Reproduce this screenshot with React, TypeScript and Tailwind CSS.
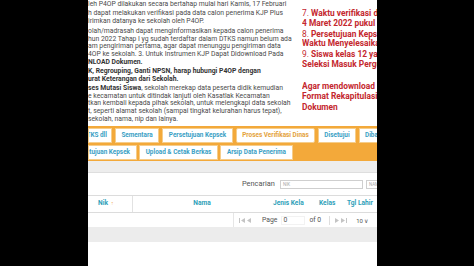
const tab =
  'flex items-center justify-center h-full shrink-0 bg-white border border-[#f6cd8a] text-[#3a9fc5] font-bold text-[6.4px] whitespace-nowrap overflow-hidden';

const First = ({ flip = false }: { flip?: boolean }) => (
  <svg width="6" height="5" viewBox="0 0 6 5" className={flip ? 'rotate-180' : ''}>
    <rect x="0" y="0" width="1" height="5" fill="#c4c4c4" />
    <path d="M6 0 L2 2.5 L6 5 Z" fill="#c4c4c4" />
  </svg>
);

const Prev = ({ flip = false }: { flip?: boolean }) => (
  <svg width="4" height="5" viewBox="0 0 4 5" className={flip ? 'rotate-180' : ''}>
    <path d="M4 0 L0 2.5 L4 5 Z" fill="#c4c4c4" />
  </svg>
);

const TopText = () => (
  <div className="flex h-[126px] shrink-0">
    <div className="w-[214px] shrink-0 pt-[1px] text-[6.8px] leading-[7.7px] text-[#4a4a4a] whitespace-nowrap overflow-hidden">
      <div>leh P4OP dilakukan secara bertahap mulai hari Kamis, 17 Februari</div>
      <div className="mt-[1.3px]">
        <div>h dapat melakukan verifikasi pada data calon penerima KJP Plus</div>
        <div>irimkan datanya ke sekolah oleh P4OP.</div>
      </div>
      <div className="mt-[2.6px]">
        <div>olah/madrasah dapat menginformasikan kepada calon penerima</div>
        <div>hun 2022 Tahap I yg sudah terdaftar dalam DTKS namun belum ada</div>
        <div>am pengiriman pertama, agar dapat menunggu pengiriman data</div>
        <div>4OP ke sekolah. 3. Untuk Instrumen KJP Dapat Didownload Pada</div>
        <div className="font-bold text-[#333]">NLOAD Dokumen.</div>
      </div>
      <div className="mt-[1.5px] font-bold text-[#333]">
        <div>K, Regrouping, Ganti NPSN, harap hubungi P4OP dengan</div>
        <div>urat Keterangan dari Sekolah.</div>
      </div>
      <div className="mt-[1.6px]">
        <div>
          <span className="font-bold text-[#333]">ses Mutasi Siswa</span>, sekolah merekap data peserta didik kemudian
        </div>
        <div>e kecamatan untuk ditindak lanjuti oleh Kasatlak Kecamatan</div>
        <div>tkan kembali kepada pihak sekolah, untuk melengkapi data sekolah</div>
        <div>t, seperti alamat sekolah (sampai tingkat kelurahan harus tepat),</div>
        <div>sekolah, nama, nip dan lainya.</div>
      </div>
    </div>
    <div className="flex-1 pt-[9px] text-[8.4px] leading-[9.7px] font-bold text-[#c4272e] whitespace-nowrap overflow-hidden">
      <div>
        <span className="font-normal">7. </span>Waktu verifikasi dinas
      </div>
      <div>4 Maret 2022 pukul 23.59</div>
      <div className="mt-[1.3px]">
        <span className="font-normal">8. </span>Persetujuan Kepsek
      </div>
      <div>Waktu Menyelesaikan</div>
      <div className="mt-[1.3px]">
        <span className="font-normal">9. </span>Siswa kelas 12 yang
      </div>
      <div>Seleksi Masuk Perguruan</div>
      <div className="mt-[11px] leading-[10.4px]">
        <div>Agar mendownload</div>
        <div>Format Rekapitulasi</div>
        <div>Dokumen</div>
      </div>
    </div>
  </div>
);

const Tabs = () => (
  <div className="h-[35px] shrink-0 bg-[#f3a93a] pt-[2px] flex flex-col gap-[2px]">
    <div className="flex h-[15px] gap-[3px]">
      <div className={`${tab} w-[24px] justify-end pr-[4px]`}>DTKS dll</div>
      <div className={`${tab} w-[44px]`}>Sementara</div>
      <div className={`${tab} w-[71px]`}>Persetujuan Kepsek</div>
      <div className={`${tab} w-[79px] border-[#2e2e2e] rounded-[2px] text-[#e4a23c]`}>
        Proses Verifikasi Dinas
      </div>
      <div className={`${tab} w-[38px]`}>Disetujui</div>
      <div className={`${tab} w-[40px] justify-start pl-[5px]`}>Dibatalkan</div>
    </div>
    <div className="flex h-[15px] gap-[2px]">
      <div className={`${tab} w-[49px] justify-end pr-[6px]`}>Persetujuan Kepsek</div>
      <div className={`${tab} w-[79px]`}>Upload &amp; Cetak Berkas</div>
      <div className={`${tab} w-[73px]`}>Arsip Data Penerima</div>
    </div>
  </div>
);

const SearchRow = () => (
  <div className="h-[22px] shrink-0 flex items-center pl-[154px] gap-[5px] text-[7.4px] text-[#555] whitespace-nowrap">
    <span>Pencarian</span>
    <div className="w-[83px] h-[9px] shrink-0 border border-[#cfcfcf] text-[4.5px] text-[#aaa] pl-[2px] leading-[7px]">NIK</div>
    <div className="w-[80px] h-[9px] shrink-0 border border-[#cfcfcf] text-[4.5px] text-[#aaa] pl-[2px] leading-[7px] -ml-[2px]">NAMA</div>
  </div>
);

const Table = () => (
  <div className="flex flex-col flex-1">
    <div className="h-[18px] shrink-0 flex items-center border-y border-[#dcdcdc] text-[6.6px] font-bold text-[#2f9fb9] whitespace-nowrap">
      <div className="w-[45px] h-full flex items-center pl-[10px] gap-[3px] border-r border-[#e2e2e2]">
        Nik <span className="text-[#f0a84a] font-normal text-[5px]">↑</span>
      </div>
      <div className="w-[138px] text-center">Nama</div>
      <div className="w-[44px] pl-[2px]">Jenis Kela</div>
      <div className="w-[30px] pl-[4px]">Kelas</div>
      <div className="pl-[2px]">Tgl Lahir</div>
    </div>
    <div className="h-[14px] shrink-0 flex items-center text-[6.8px] text-[#555] whitespace-nowrap">
      <div className="w-[146px] h-full border-r border-[#e6e6e6]" />
      <div className="flex items-center gap-[2px] pl-[5px]">
        <First />
        <Prev />
      </div>
      <span className="ml-[11px]">Page</span>
      <div className="ml-[4px] w-[24px] h-[9px] border border-[#f2f2f2] pl-[1px] leading-[7px]">0</div>
      <span className="ml-[4px]">of 0</span>
      <div className="ml-[8px] w-px h-[9px] bg-[#dedede]" />
      <div className="flex items-center gap-[2px] ml-[5px]">
        <Prev flip />
        <First flip />
      </div>
      <span className="ml-[9px] text-[6px]">10 ∨</span>
    </div>
    <div className="h-[15px] shrink-0 bg-[#ececec]" />
    <div className="flex-1 bg-white" />
  </div>
);

export default function App() {
  return (
    <div className="flex h-[266px] w-[474px] bg-black font-['Roboto',sans-serif] overflow-hidden">
      <div className="w-[88px] shrink-0 bg-black" />
      <main className="w-[289px] shrink-0 bg-white flex flex-col overflow-hidden">
        <TopText />
        <Tabs />
        <div className="h-[12px] shrink-0 bg-[#ededed] border-b border-[#dedede]" />
        <SearchRow />
        <Table />
      </main>
      <div className="flex-1 bg-black" />
    </div>
  );
}
